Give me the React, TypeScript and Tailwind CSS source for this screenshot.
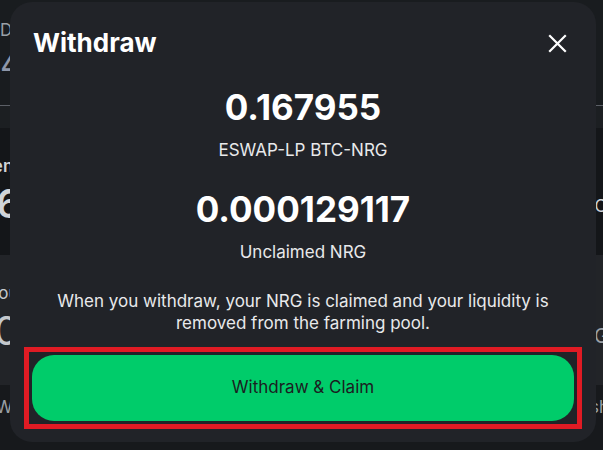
const font = { fontFamily: "Inter, 'Noto Sans', sans-serif" };

const CloseIcon = () => (
  <svg width="19" height="19" viewBox="0 0 19 19" fill="none" stroke="currentColor" strokeWidth="2.2" strokeLinecap="square">
    <path d="M2 2L17 17M17 2L2 17" />
  </svg>
);

const Backdrop = () => (
  <div className="flex h-[450px] w-full flex-col bg-[#191c1f] text-[#9aa0a6]">
    <div className="flex h-[105px] flex-col gap-1 pt-[20px]">
      <span className="text-[17px] leading-5">Deposited</span>
      <span className="text-[34px] leading-10 text-[#8d96a8]">4</span>
    </div>
    <div className="h-px bg-[#5b5f66]" />
    <div className="h-[22px] bg-[#1c1f22]" />
    <div className="flex h-[127px] items-start justify-between bg-[#141619] pt-[26px]">
      <div className="flex flex-col">
        <span className="-ml-[18px] text-[17px] font-semibold text-[#d0d4d8]">Pending</span>
        <span className="-ml-[4px] text-[40px] font-semibold leading-[48px] text-[#d0d4d8]">6</span>
      </div>
      <span className="mt-[40px] mr-[-4px] text-[17px] text-[#cfd3d7]">BTC</span>
    </div>
    <div className="flex h-[130px] items-start justify-between bg-[#222428] pt-[26px]">
      <div className="flex flex-col">
        <span className="-ml-[12px] text-[17px] text-[#c4c8cc]">Your</span>
        <span className="-ml-[6px] text-[40px] leading-[48px] text-[#c4c8cc]">0</span>
      </div>
      <span className="mt-[40px] mr-[-6px] text-[20px] text-[#9aa0a6]">NRG</span>
    </div>
    <div className="flex flex-1 items-center justify-between bg-[#17191c] pb-[20px]">
      <span className="-ml-[4px] text-[17px] text-[#9aa0a6]">Withdraw</span>
      <span className="mr-[-6px] text-[17px] text-[#9aa0a6]">Cash</span>
    </div>
  </div>
);

export default function App() {
  return (
    <div className="relative h-[450px] w-[603px] overflow-hidden" style={font}>
      <Backdrop />
      <div className="absolute left-[10px] top-[2px] flex h-[440px] w-[586px] flex-col rounded-[22px] bg-[#212328] px-[22px] pt-[25px] text-white">
        <div className="flex h-[32px] items-center justify-between pl-[1px]">
          <h2 className="text-[26px] font-bold leading-[32px]">Withdraw</h2>
          <button type="button" className="mr-[7px] mt-[1px] text-white" aria-label="Close">
            <CloseIcon />
          </button>
        </div>
        <div className="mt-[26px] flex flex-col items-center text-center">
          <span className="text-[35px] font-bold leading-[44px]">0.167955</span>
          <span className="mt-[9px] text-[17px] leading-[24px] text-[#e8e9eb]">ESWAP-LP BTC-NRG</span>
          <span className="mt-[25px] text-[35px] font-bold leading-[44px]">0.000129117</span>
          <span className="mt-[9px] text-[17px] leading-[24px] text-[#e8e9eb]">Unclaimed NRG</span>
          <p className="mt-[26px] text-[17px] leading-[22px] text-[#e8e9eb]">
            When you withdraw, your NRG is claimed and your liquidity is removed
            from the farming pool.
          </p>
        </div>
        <div className="-mx-[8px] mt-[13px] border-[5px] border-[#e01b24] p-[3px]">
          <button
            type="button"
            className="flex h-[66px] w-full items-center justify-center rounded-[22px] bg-[#00cc6a] text-[17px] text-[#1b1d21]"
          >
            Withdraw &amp; Claim
          </button>
        </div>
      </div>
    </div>
  );
}
